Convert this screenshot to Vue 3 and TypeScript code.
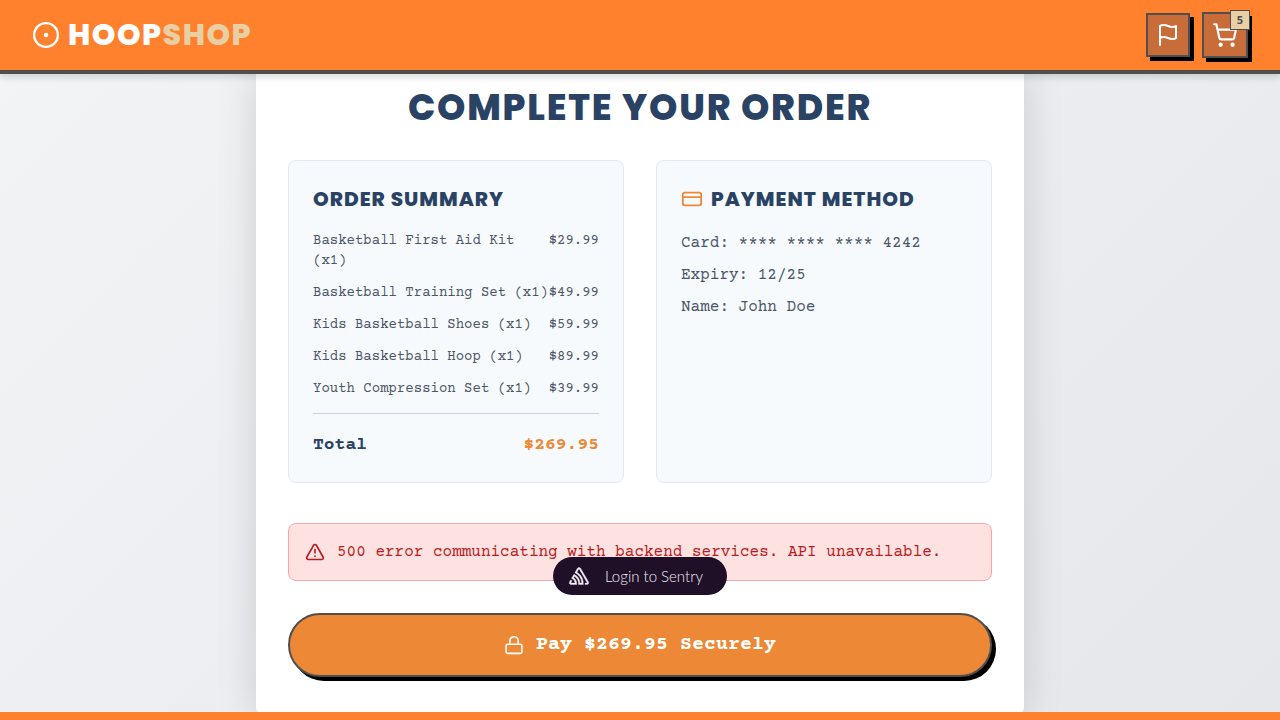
<script setup lang="ts">
import { computed } from 'vue'

interface OrderLine {
  name: string
  quantity: number
  price: number
}

const lines: OrderLine[] = [
  { name: 'Basketball First Aid Kit', quantity: 1, price: 29.99 },
  { name: 'Basketball Training Set', quantity: 1, price: 49.99 },
  { name: 'Kids Basketball Shoes', quantity: 1, price: 59.99 },
  { name: 'Kids Basketball Hoop', quantity: 1, price: 89.99 },
  { name: 'Youth Compression Set', quantity: 1, price: 39.99 },
]

const money = (value: number): string => `$${value.toFixed(2)}`
const total = computed(() => money(lines.reduce((sum, l) => sum + l.price * l.quantity, 0)))
const count = computed(() => lines.reduce((sum, l) => sum + l.quantity, 0))

const payment: string[] = ['Card: **** **** **** 4242', 'Expiry: 12/25', 'Name: John Doe']
</script>

<template>
  <div class="page">
    <header class="topbar">
      <a class="brand" href="#">
        <svg class="brand-icon" viewBox="0 0 28 28" fill="none" stroke="currentColor" stroke-width="2.3">
          <circle cx="14" cy="14" r="11.9" />
          <circle cx="14" cy="14" r="2.3" fill="currentColor" stroke="none" />
        </svg>
        <span class="brand-name">HOOP<span class="brand-accent">SHOP</span></span>
      </a>
      <nav class="actions">
        <button class="square" type="button" aria-label="Flag">
          <svg class="icon24" viewBox="0 0 24 24" fill="none" stroke="currentColor" stroke-width="2" stroke-linecap="round" stroke-linejoin="round">
            <path d="M4 15s1-1 4-1 5 2 8 2 4-1 4-1V3s-1 1-4 1-5-2-8-2-4 1-4 1z" />
            <line x1="4" x2="4" y1="22" y2="15" />
          </svg>
        </button>
        <button class="square cart" type="button" aria-label="Cart">
          <svg class="icon26" viewBox="0 0 24 24" fill="none" stroke="currentColor" stroke-width="2" stroke-linecap="round" stroke-linejoin="round">
            <circle cx="8" cy="21" r="1" fill="currentColor" />
            <circle cx="19" cy="21" r="1" fill="currentColor" />
            <path d="M2.05 2.05h2l2.66 12.42a2 2 0 0 0 2 1.58h9.78a2 2 0 0 0 1.95-1.57l1.65-7.43H5.12" />
          </svg>
          <span class="badge">{{ count }}</span>
        </button>
      </nav>
    </header>

    <main class="sheet">
      <h1>COMPLETE YOUR ORDER</h1>
      <div class="columns">
        <section class="card">
          <h2>ORDER SUMMARY</h2>
          <ul class="lines">
            <li v-for="line in lines" :key="line.name">
              <span>{{ line.name }} (x{{ line.quantity }})</span>
              <span>{{ money(line.price) }}</span>
            </li>
          </ul>
          <div class="total">
            <span>Total</span>
            <span class="amount">{{ total }}</span>
          </div>
        </section>
        <section class="card">
          <h2>
            <svg class="card-icon" viewBox="0 0 24 24" fill="none" stroke="currentColor" stroke-width="2" stroke-linecap="round" stroke-linejoin="round">
              <rect x="2" y="5" width="20" height="14" rx="2" />
              <line x1="2" x2="22" y1="10" y2="10" />
            </svg>
            <span>PAYMENT METHOD</span>
          </h2>
          <div class="payment">
            <p v-for="entry in payment" :key="entry">{{ entry }}</p>
          </div>
        </section>
      </div>
      <div class="alert" role="alert">
        <svg class="icon20" viewBox="0 0 24 24" fill="none" stroke="currentColor" stroke-width="2" stroke-linecap="round" stroke-linejoin="round">
          <path d="m21.73 18-8-14a2 2 0 0 0-3.48 0l-8 14A2 2 0 0 0 4 21h16a2 2 0 0 0 1.73-3" />
          <path d="M12 9v4" />
          <path d="M12 17h.01" />
        </svg>
        <span>500 error communicating with backend services. API unavailable.</span>
      </div>
      <button class="pay" type="button">
        <svg class="icon20" viewBox="0 0 24 24" fill="none" stroke="currentColor" stroke-width="1.9" stroke-linecap="round" stroke-linejoin="round">
          <rect x="2.5" y="11" width="19" height="11" rx="2" />
          <path d="M7 11V7a5 5 0 0 1 10 0v4" />
        </svg>
        <span>Pay {{ total }} Securely</span>
      </button>
    </main>

    <a class="sentry" href="#">
      <svg class="sentry-icon" viewBox="0 0 72 66" fill="currentColor" stroke="currentColor" stroke-width="1">
        <path d="M29 2.26a4.67 4.67 0 0 0-8 0L14.42 13.53A32.21 32.21 0 0 1 32.17 40.19H27.55A27.68 27.68 0 0 0 12.09 17.47L6 28a15.92 15.92 0 0 1 9.23 12.17H4.62A.76.76 0 0 1 4 39.06l2.94-5a10.74 10.74 0 0 0-3.36-1.9l-2.91 5a4.54 4.54 0 0 0 1.69 6.24A4.66 4.66 0 0 0 4.62 44H19.15a19.4 19.4 0 0 0-8-17.31l2.31-4A23.87 23.87 0 0 1 23.76 44H36.07a35.88 35.88 0 0 0-16.41-31.8l4.67-8a.77.77 0 0 1 1.05-.27c.53.29 20.29 34.77 20.66 35.17a.76.76 0 0 1-.68 1.13H40.6q.09 1.91 0 3.81h4.78A4.59 4.59 0 0 0 50 39.43a4.49 4.49 0 0 0-.62-2.28Z" transform="translate(11 11)" />
      </svg>
      <span>Login to Sentry</span>
    </a>
    <div class="bottombar"></div>
  </div>
</template>

<style>
body {
  margin: 0;
}
</style>

<style scoped>
.page {
  box-sizing: border-box;
  min-height: 100vh;
  overflow: hidden;
  background: linear-gradient(135deg, #f3f4f6, #e5e7eb);
  font-family: 'Courier Prime', 'Liberation Mono', monospace;
  font-size: 16px;
  color: #4a5568;
}
.topbar {
  box-sizing: border-box;
  height: 74px;
  display: flex;
  align-items: center;
  justify-content: space-between;
  padding: 0 32px;
  background: #ff812e;
  border-bottom: 4px solid #4f4f4f;
  box-shadow: 0 4px 6px rgba(0, 0, 0, 0.12);
  position: relative;
  z-index: 1;
}
.brand {
  display: flex;
  align-items: center;
  gap: 8px;
  color: #fff;
  text-decoration: none;
}
.brand-icon {
  width: 28px;
  height: 28px;
}
.brand-name,
h1,
h2 {
  font-family: Poppins, Inter, sans-serif;
  font-weight: 800;
  letter-spacing: 0.05em;
}
.brand-name {
  font-size: 30px;
  line-height: 40px;
}
.brand-accent {
  color: #e8d0a4;
}
.actions {
  display: flex;
  align-items: center;
  gap: 12px;
}
.square {
  box-sizing: border-box;
  width: 44px;
  height: 44px;
  padding: 0;
  display: flex;
  align-items: center;
  justify-content: center;
  color: #fff;
  background: #c86d39;
  border: 2px solid #4f4f4f;
  box-shadow: 4px 4px 0 #000;
  position: relative;
}
.cart {
  width: 46px;
  height: 46px;
}
.badge {
  box-sizing: border-box;
  position: absolute;
  top: -4px;
  right: -4px;
  width: 20px;
  height: 20px;
  border: 1px solid #4f4f4f;
  background: #e8d0a4;
  color: #4f4f4f;
  font: 700 11px/18px 'Noto Sans', sans-serif;
  text-align: center;
}
.icon20 {
  width: 20px;
  height: 20px;
}
.icon24 {
  width: 24px;
  height: 24px;
}
.icon26 {
  width: 26px;
  height: 26px;
}
.sheet {
  box-sizing: border-box;
  max-width: 768px;
  margin: 0 auto;
  padding: 12px 32px 38px;
  background: #fff;
  border-radius: 0 0 8px 8px;
  box-shadow: 0 0 40px rgba(0, 0, 0, 0.15);
}
h1 {
  margin: 0 0 30px;
  font-size: 36px;
  line-height: 44px;
  text-align: center;
  color: #2a4365;
}
.columns {
  display: grid;
  grid-template-columns: 1fr 1fr;
  gap: 32px;
  margin-bottom: 40px;
}
.card {
  padding: 24px;
  background: #f7fafc;
  border: 1px solid #e2e8f0;
  border-radius: 8px;
}
h2 {
  display: flex;
  align-items: center;
  gap: 8px;
  margin: 0 0 18px;
  font-size: 20px;
  line-height: 28px;
  color: #2a4365;
}
.card-icon {
  width: 22px;
  height: 22px;
  color: #ed8936;
}
.lines {
  list-style: none;
  margin: 0;
  padding: 0;
  display: flex;
  flex-direction: column;
  gap: 12px;
  font-size: 14px;
  line-height: 20px;
}
.lines li {
  display: flex;
  justify-content: space-between;
}
.total {
  display: flex;
  justify-content: space-between;
  margin-top: 14px;
  padding-top: 18px;
  border-top: 1px solid #cbd5e0;
  font-size: 18px;
  line-height: 26px;
  font-weight: 700;
  color: #2a4365;
}
.amount {
  color: #ed8936;
}
.payment {
  display: flex;
  flex-direction: column;
  gap: 8px;
}
.payment p {
  margin: 0;
  line-height: 24px;
}
.alert {
  display: flex;
  align-items: center;
  gap: 12px;
  padding: 16px;
  margin-bottom: 32px;
  line-height: 24px;
  color: #b91c1c;
  background: #fee2e2;
  border: 1px solid #fca5a5;
  border-radius: 8px;
}
.pay {
  box-sizing: border-box;
  width: 100%;
  display: flex;
  align-items: center;
  justify-content: center;
  gap: 12px;
  padding: 16px;
  border: 2px solid #4f4f4f;
  border-radius: 32px;
  background: #ed8936;
  color: #fff;
  font: 700 20px/28px 'Courier Prime', 'Liberation Mono', monospace;
  box-shadow: 4px 4px 0 #000;
}
.sentry {
  position: fixed;
  left: 50%;
  bottom: 125px;
  transform: translateX(-50%);
  z-index: 2;
  box-sizing: border-box;
  height: 38px;
  display: flex;
  align-items: center;
  gap: 12px;
  padding: 0 24px 0 12px;
  border-radius: 19px;
  background: #1f1028;
  color: #f3eff6;
  font: 300 15px/20px Lato, sans-serif;
  text-decoration: none;
  white-space: nowrap;
}
.sentry-icon {
  width: 28px;
  height: 26px;
}
.bottombar {
  position: fixed;
  left: 0;
  right: 0;
  bottom: 0;
  height: 8px;
  background: #ff812e;
}
</style>
